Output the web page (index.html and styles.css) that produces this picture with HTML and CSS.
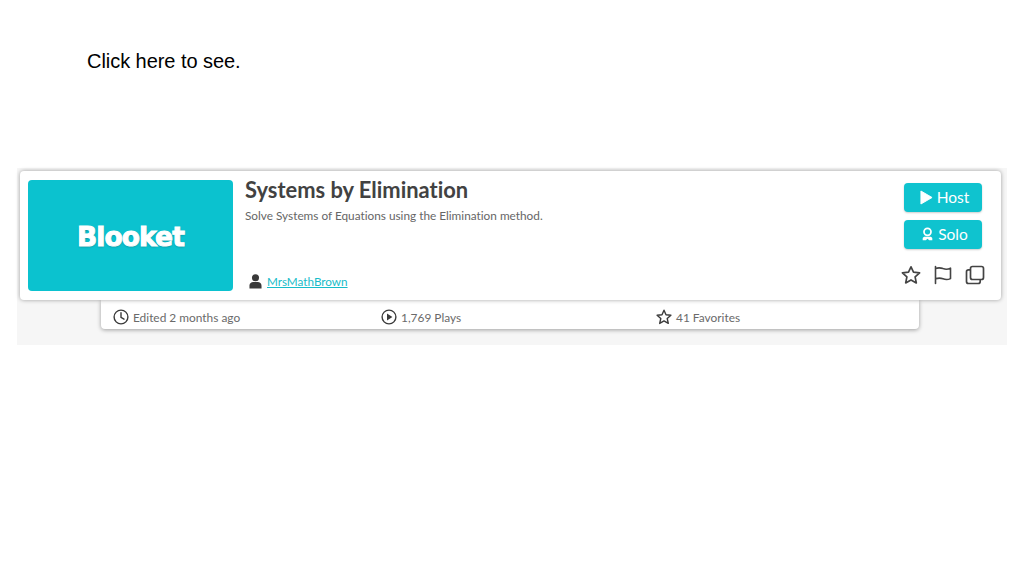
FILE: index.html
```html
<!DOCTYPE html>
<html lang="en">
<head>
<meta charset="utf-8">
<title>Systems by Elimination</title>
<link rel="stylesheet" href="styles.css">
</head>
<body>
<p class="intro">Click here to see.</p>
<section class="panel">
  <div class="card">
    <div class="thumb"><span class="logo">Blooket</span></div>
    <div class="info">
      <h1 class="title">Systems by Elimination</h1>
      <p class="desc">Solve Systems of Equations using the Elimination method.</p>
      <div class="author">
        <svg class="person" viewBox="0 0 14 16" width="13" height="15"><circle cx="7" cy="4" r="3.8" fill="#3a3a3a"/><path d="M0.5 15.5V12.5C0.5 10 2.5 8.6 4.5 8.6H9.5C11.5 8.6 13.5 10 13.5 12.5V15.5Z" fill="#3a3a3a"/></svg>
        <a class="author-link" href="#">MrsMathBrown</a>
      </div>
    </div>
    <div class="actions">
      <a class="btn" href="#"><svg class="btn-icon" viewBox="0 0 14 16" width="13" height="15"><path d="M1 1L13 8L1 15Z" fill="#fff" stroke="#fff" stroke-linejoin="round"/></svg>Host</a>
      <a class="btn" href="#"><svg class="btn-icon" viewBox="0 0 14 16" width="13" height="14"><circle cx="7" cy="5.5" r="4" fill="none" stroke="#fff" stroke-width="2"/><path d="M1.5 15V13C1.5 11.5 3 11 4 11H10C11 11 12.5 11.5 12.5 13V15H9L7 13.5L5 15Z" fill="#fff"/></svg>Solo</a>
      <div class="tools">
        <svg viewBox="0 0 20 20" width="20" height="20"><path d="M10 1.8L12.5 7.2L18.6 7.9L14.1 11.9L15.3 17.9L10 14.9L4.7 17.9L5.9 11.9L1.4 7.9L7.5 7.2Z" fill="none" stroke="#444" stroke-width="1.7" stroke-linejoin="round"/></svg>
        <svg viewBox="0 0 20 20" width="20" height="20"><path d="M2.5 1.5V18.5M2.5 3.5C6 2.2 8 2.8 10 3.6C12.5 4.5 15 4.4 17.5 3.2V13.6C15 14.8 12.5 14.8 10 13.8C8 13 6 12.6 2.5 13.8" fill="none" stroke="#444" stroke-width="1.6" stroke-linejoin="round" stroke-linecap="round"/></svg>
        <svg viewBox="0 0 20 20" width="20" height="20"><rect x="5.5" y="1.5" width="13" height="13" rx="2" fill="none" stroke="#444" stroke-width="1.7"/><path d="M5.5 4.8H3.5C2.4 4.8 1.5 5.7 1.5 6.8V16.5C1.5 17.6 2.4 18.5 3.5 18.5H13.2C14.3 18.5 15.2 17.6 15.2 16.5V14.5" fill="none" stroke="#444" stroke-width="1.7"/></svg>
      </div>
    </div>
  </div>
  <div class="stats">
    <div class="stat stat-edited"><svg viewBox="0 0 16 16" width="16" height="16"><circle cx="8" cy="8" r="6.9" fill="none" stroke="#3a3a3a" stroke-width="1.4"/><path d="M8 3.8V8.4L11 10.2" fill="none" stroke="#3a3a3a" stroke-width="1.4" stroke-linecap="round"/></svg>Edited 2 months ago</div>
    <div class="stat stat-plays"><svg viewBox="0 0 16 16" width="16" height="16"><circle cx="8" cy="8" r="6.9" fill="none" stroke="#3a3a3a" stroke-width="1.4"/><path d="M6 4.6L11.4 8L6 11.4Z" fill="#3a3a3a"/></svg>1,769 Plays</div>
    <div class="stat"><svg viewBox="0 0 16 16" width="16" height="16"><path d="M8 1.2L10 5.7L14.9 6.2L11.2 9.5L12.3 14.4L8 11.9L3.7 14.4L4.8 9.5L1.1 6.2L6 5.7Z" fill="none" stroke="#3a3a3a" stroke-width="1.4" stroke-linejoin="round"/></svg>41 Favorites</div>
  </div>
</section>
</body>
</html>
```

FILE: styles.css
```css
html, body {
  margin: 0;
  padding: 0;
  background: #fff;
}

body {
  width: 1024px;
  height: 576px;
  overflow: hidden;
  font-family: "Lato", "Noto Sans", sans-serif;
  font-variant-ligatures: none;
  color: #3a3a3a;
}

.intro {
  margin: 0;
  padding: 49px 0 0 87px;
  height: 168px;
  box-sizing: border-box;
  font: 20px/24px "Liberation Sans", Arial, sans-serif;
  letter-spacing: -0.05px;
  color: #000;
}

.panel {
  width: 990px;
  height: 177px;
  margin-left: 17px;
  padding: 3px 6px 0 3px;
  box-sizing: border-box;
  background: #f6f6f6;
}

.card {
  position: relative;
  z-index: 1;
  display: flex;
  height: 129px;
  padding: 9px 16px 8px 8px;
  box-sizing: border-box;
  background: #fff;
  border-radius: 4px;
  box-shadow: 0 0 4px rgba(0, 0, 0, 0.36);
}

.thumb {
  flex: none;
  width: 205px;
  height: 111px;
  padding-top: 3px;
  box-sizing: border-box;
  display: flex;
  align-items: center;
  justify-content: center;
  background: #0bc2cf;
  border-radius: 4px;
}

.logo {
  font: 800 26.5px/1 "DejaVu Sans", sans-serif;
  letter-spacing: -0.9px;
  color: #fff;
  text-shadow: 0 1px 2px rgba(0, 0, 0, 0.3);
  -webkit-text-stroke: 1px #fff;
}

.info {
  flex: 1;
  display: flex;
  flex-direction: column;
  margin-left: 12px;
}

.title {
  margin: 0;
  font-size: 21.9px;
  line-height: 20px;
  font-weight: 700;
  color: #424242;
}

.desc {
  margin: 8px 0 0;
  font-size: 11.8px;
  line-height: 15px;
  color: #666;
}

.author {
  margin-top: auto;
  display: flex;
  align-items: center;
  gap: 5px;
  padding: 0 0 1px 4px;
  height: 20px;
}

.author-link {
  font-size: 11.7px;
  color: #16bcc9;
}

.actions {
  flex: none;
  width: 84px;
  display: flex;
  flex-direction: column;
  align-items: center;
  padding-top: 3px;
}

.btn {
  width: 78px;
  height: 29px;
  margin-bottom: 8px;
  padding: 0 0 1px 3px;
  box-sizing: border-box;
  display: flex;
  align-items: center;
  justify-content: center;
  gap: 4px;
  background: #0fc3cf;
  border-radius: 4px;
  box-shadow: 0 1px 2px rgba(0, 0, 0, 0.2);
  color: #fff;
  font-size: 15.5px;
  text-decoration: none;
}

.btn-icon {
  flex: none;
}

.tools {
  width: 100%;
  margin-top: 8px;
  display: flex;
  justify-content: space-between;
}

.stats {
  display: flex;
  height: 29px;
  margin: 0 82px 0 81px;
  padding: 5px 12px 0;
  box-sizing: border-box;
  align-items: center;
  background: #fff;
  border-radius: 0 0 4px 4px;
  box-shadow: 0 1px 4px rgba(0, 0, 0, 0.36);
  font-size: 11.9px;
  color: #6a6a6a;
}

.stat {
  display: flex;
  align-items: center;
  gap: 4px;
}

.stat-edited {
  width: 268px;
}

.stat-plays {
  width: 275px;
}
```
